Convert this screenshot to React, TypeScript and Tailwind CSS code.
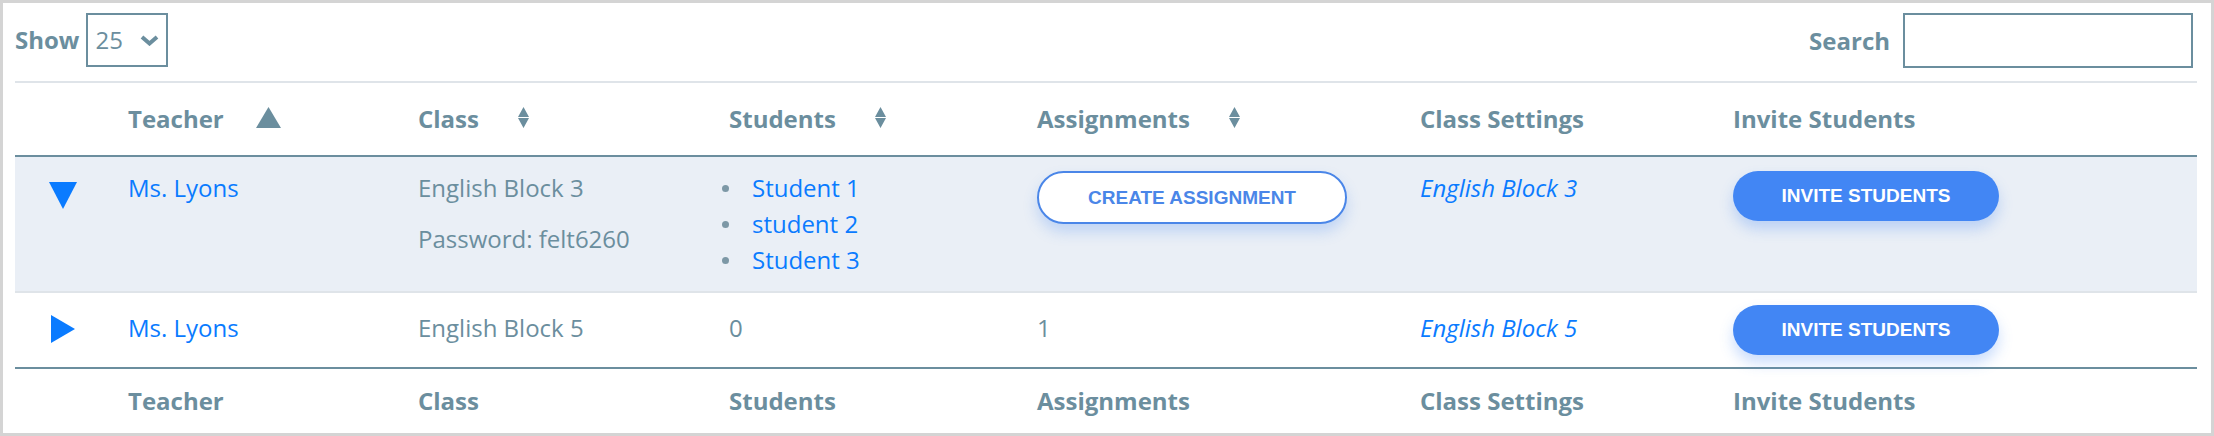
import React from "react";

const cols = "grid grid-cols-[113px_290px_311px_308px_383px_313px_1fr]";

function SortBoth() {
    return (
        <svg width="11" height="21" viewBox="0 0 11 21" className="mb-[4px]">
            <path d="M5.5 0L11 10H0z M0 11h11L5.5 21z" fill="#6b8e9e" />
        </svg>
    );
}

function SortUp() {
    return (
        <svg width="25" height="21" viewBox="0 0 25 21" className="mb-[3px]">
            <path d="M12.5 0L25 21H0z" fill="#6b8e9e" />
        </svg>
    );
}

function HeaderRow({ sorting }: { sorting: boolean }) {
    const cell = "flex items-center";
    return (
        <div className={clsxCols(sorting ? "h-[72px]" : "h-[64px]")}>
            <div />
            <div className={cell}>
                Teacher
                {sorting && <span className="ml-[32px] w-[25px] flex justify-center"><SortUp /></span>}
            </div>
            <div className={cell}>
                Class
                {sorting && <span className="ml-[32px] w-[25px] flex justify-center"><SortBoth /></span>}
            </div>
            <div className={cell}>
                Students
                {sorting && <span className="ml-[32px] w-[25px] flex justify-center"><SortBoth /></span>}
            </div>
            <div className={cell}>
                Assignments
                {sorting && <span className="ml-[32px] w-[25px] flex justify-center"><SortBoth /></span>}
            </div>
            <div className={cell}>Class Settings</div>
            <div className={cell}>Invite Students</div>
        </div>
    );
}

function clsxCols(extra: string) {
    return cols + " font-bold text-[#6b8e9e] " + extra;
}

function InviteButton() {
    return (
        <button className="h-[50px] w-[266px] rounded-full bg-[#4286f4] text-white font-['Liberation_Sans',Arial,sans-serif] font-bold text-[19px] uppercase shadow-[0_8px_14px_rgba(66,134,244,0.28)]">
            Invite Students
        </button>
    );
}

export default function App() {
    return (
        <div className="w-[2214px] h-[436px] border-[3px] border-[#d4d4d4] bg-white pt-[10px] pl-[12px] pr-[14px] font-['Open_Sans',sans-serif] text-[24px] leading-[36px] text-[#6b8e9e]">
            {/* toolbar */}
            <div className="h-[68px] flex items-start justify-between">
                <div className="flex items-center h-[54px] gap-[7px]">
                    <span className="font-bold">Show</span>
                    <div className="w-[82px] h-[54px] border-2 border-[#6b8e9e] flex items-center justify-between pl-[7px] pr-[7px]">
                        <span className="font-normal">25</span>
                        <svg width="19" height="11" viewBox="0 0 19 11">
                            <polyline points="2,2 9.5,8.5 17,2" fill="none" stroke="#6b8e9e" strokeWidth="4" />
                        </svg>
                    </div>
                </div>
                <div className="flex items-center h-[55px] gap-[13px] mr-[4px]">
                    <span className="font-bold">Search</span>
                    <input className="w-[290px] h-[55px] border-2 border-[#6b8e9e] outline-none px-2" />
                </div>
            </div>

            <div className="border-t-2 border-[#dfe4e9]">
                <HeaderRow sorting={true} />
            </div>

            {/* row 1 - expanded */}
            <div className={cols + " border-t-2 border-[#6b8e9e] bg-[#eaeff6] h-[136px] items-start"}>
                <div className="pt-[25px] pl-[34px]">
                    <svg width="28" height="27" viewBox="0 0 28 27">
                        <path d="M0 0h28L14 27z" fill="#0a7bff" />
                    </svg>
                </div>
                <div className="pt-[13px] text-[#0a7bff]">Ms. Lyons</div>
                <div className="pt-[13px]">
                    <div>English Block 3</div>
                    <div className="mt-[15px]">Password: felt6260</div>
                </div>
                <ul className="pt-[13px]">
                    {["Student 1", "student 2", "Student 3"].map((s) => (
                        <li key={s} className="-ml-[7px] flex items-center gap-[23px]">
                            <span className="w-[7px] h-[7px] rounded-full bg-[#7d98a6]" />
                            <span className="text-[#0a7bff]">{s}</span>
                        </li>
                    ))}
                </ul>
                <div className="pt-[14px]">
                    <button className="h-[53px] w-[310px] rounded-full border-2 border-[#4a86e8] bg-white text-[#4a86e8] font-['Liberation_Sans',Arial,sans-serif] font-bold text-[19px] uppercase shadow-[0_8px_14px_rgba(66,134,244,0.25)]">
                        Create Assignment
                    </button>
                </div>
                <div className="pt-[13px] italic text-[#0a7bff]">English Block 3</div>
                <div className="pt-[14px]">
                    <InviteButton />
                </div>
            </div>

            {/* row 2 */}
            <div className={cols + " border-t-2 border-[#dfe4e9] h-[76px] items-start"}>
                <div className="pt-[22px] pl-[36px]">
                    <svg width="24" height="28" viewBox="0 0 24 28">
                        <path d="M0 0L24 14L0 28z" fill="#0a7bff" />
                    </svg>
                </div>
                <div className="pt-[17px] text-[#0a7bff]">Ms. Lyons</div>
                <div className="pt-[17px]">English Block 5</div>
                <div className="pt-[17px]">0</div>
                <div className="pt-[17px]">1</div>
                <div className="pt-[17px] italic text-[#0a7bff]">English Block 5</div>
                <div className="pt-[12px]">
                    <InviteButton />
                </div>
            </div>

            <div className="border-t-2 border-[#6b8e9e]">
                <HeaderRow sorting={false} />
            </div>
        </div>
    );
}
